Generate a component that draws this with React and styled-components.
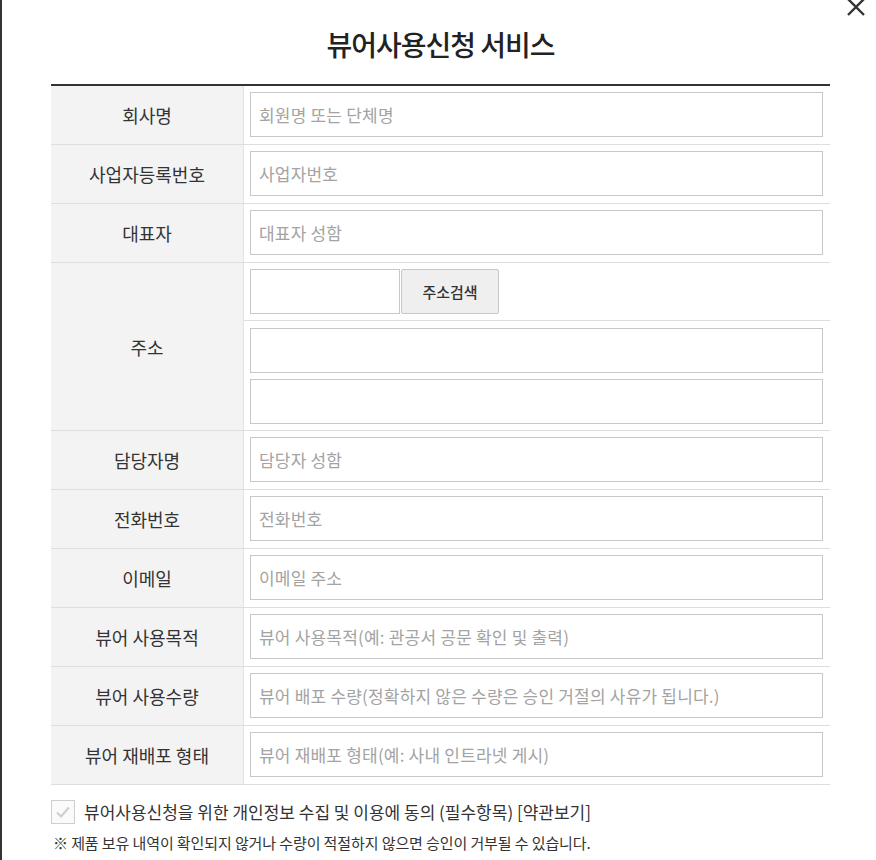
import React from "react";
import styled, { createGlobalStyle } from "styled-components";

const Global = createGlobalStyle`
  html, body { margin: 0; padding: 0; background: #fff; }
  body { font-family: "Noto Sans CJK KR", "Noto Sans", sans-serif; color: #333; }
  * { box-sizing: border-box; }
`;

const Frame = styled.div`
  position: relative;
  width: 876px;
  height: 860px;
  border-left: 2px solid #333;
  padding-left: 49px;
  overflow: hidden;
`;

const Close = styled.button`
  position: absolute;
  top: -3px;
  right: 10px;
  width: 20px;
  height: 20px;
  padding: 0;
  border: 0;
  background: none;
  cursor: pointer;
`;

const Content = styled.div`
  width: 779px;
`;

const Title = styled.h1`
  margin: 0;
  padding-top: 26px;
  height: 84px;
  font-size: 28px;
  line-height: 36px;
  font-weight: 500;
  letter-spacing: -1px;
  text-align: center;
  color: #222;
`;

const Table = styled.div`
  border-top: 2px solid #333;
`;

const Row = styled.div`
  display: grid;
  grid-template-columns: 193px 1fr;
  border-bottom: 1px solid #dedede;
`;

const Label = styled.div`
  background: #f3f3f3;
  border-right: 1px solid #e2e2e2;
  display: flex;
  align-items: center;
  justify-content: center;
  font-size: 18px;
  letter-spacing: 0;
  color: #333;
`;

const Cell = styled.div`
  padding: ${(p) => (p.$sub ? "7px 7px 6px 6px" : "6px 7px 7px 6px")};
  display: flex;
  flex-direction: column;
  gap: 6px;
`;

const SubRow = styled.div`
  display: flex;
  padding: 6px 7px 6px 6px;
  border-bottom: 1px solid #dedede;
`;

const Stack = styled.div`
  display: flex;
  flex-direction: column;
`;

const Input = styled.input`
  width: ${(p) => (p.$w ? `${p.$w}px` : "100%")};
  height: 45px;
  border: 1px solid #c8c8c8;
  padding: 0 8px;
  font-family: inherit;
  font-size: 17px;
  letter-spacing: 0.2px;
  color: #333;
  outline: none;
  &::placeholder { color: #a3a3a3; }
`;

const SearchButton = styled.button`
  width: 98px;
  height: 45px;
  margin-left: 1px;
  border: 1px solid #c8c8c8;
  border-radius: 2px;
  background: #efefef;
  font-family: inherit;
  font-size: 15px;
  font-weight: 500;
  color: #333;
  cursor: pointer;
`;

const Agree = styled.label`
  display: flex;
  align-items: center;
  gap: 9px;
  margin-top: 14px;
  font-size: 17px;
  letter-spacing: 0;
  color: #333;
`;

const Box = styled.span`
  width: 24px;
  height: 24px;
  border: 1px solid #cfcfcf;
  background: #fafafa;
  display: flex;
  align-items: center;
  justify-content: center;
`;

const Note = styled.p`
  margin: 8px 0 0 2px;
  font-size: 15px;
  letter-spacing: -0.1px;
  color: #333;
`;

const fields1 = [
  ["회사명", "회원명 또는 단체명"],
  ["사업자등록번호", "사업자번호"],
  ["대표자", "대표자 성함"],
];
const fields2 = [
  ["담당자명", "담당자 성함"],
  ["전화번호", "전화번호"],
  ["이메일", "이메일 주소"],
  ["뷰어 사용목적", "뷰어 사용목적(예: 관공서 공문 확인 및 출력)"],
  ["뷰어 사용수량", "뷰어 배포 수량(정확하지 않은 수량은 승인 거절의 사유가 됩니다.)"],
  ["뷰어 재배포 형태", "뷰어 재배포 형태(예: 사내 인트라넷 게시)"],
];

const Field = ({ label, ph }) => (
  <Row>
    <Label>{label}</Label>
    <Cell>
      <Input placeholder={ph} />
    </Cell>
  </Row>
);

export default function App() {
  return (
    <>
      <Global />
      <Frame>
        <Close aria-label="닫기">
          <svg width="20" height="20" viewBox="0 0 20 20">
            <path d="M2 2 L18 18 M18 2 L2 18" stroke="#333" strokeWidth="2.4" fill="none" />
          </svg>
        </Close>
        <Content>
          <Title>뷰어사용신청 서비스</Title>
          <Table>
            {fields1.map(([l, p]) => (
              <Field key={l} label={l} ph={p} />
            ))}
            <Row>
              <Label>주소</Label>
              <Stack>
                <SubRow>
                  <Input $w={150} />
                  <SearchButton>주소검색</SearchButton>
                </SubRow>
                <Cell $sub>
                  <Input />
                  <Input />
                </Cell>
              </Stack>
            </Row>
            {fields2.map(([l, p]) => (
              <Field key={l} label={l} ph={p} />
            ))}
          </Table>
          <Agree>
            <Box>
              <svg width="16" height="14" viewBox="0 0 16 14">
                <path d="M2 7.5 L6 11.5 L14 2.5" stroke="#cfcfcf" strokeWidth="2.2" fill="none" />
              </svg>
            </Box>
            뷰어사용신청을 위한 개인정보 수집 및 이용에 동의 (필수항목) [약관보기]
          </Agree>
          <Note>※ 제품 보유 내역이 확인되지 않거나 수량이 적절하지 않으면 승인이 거부될 수 있습니다.</Note>
        </Content>
      </Frame>
    </>
  );
}
